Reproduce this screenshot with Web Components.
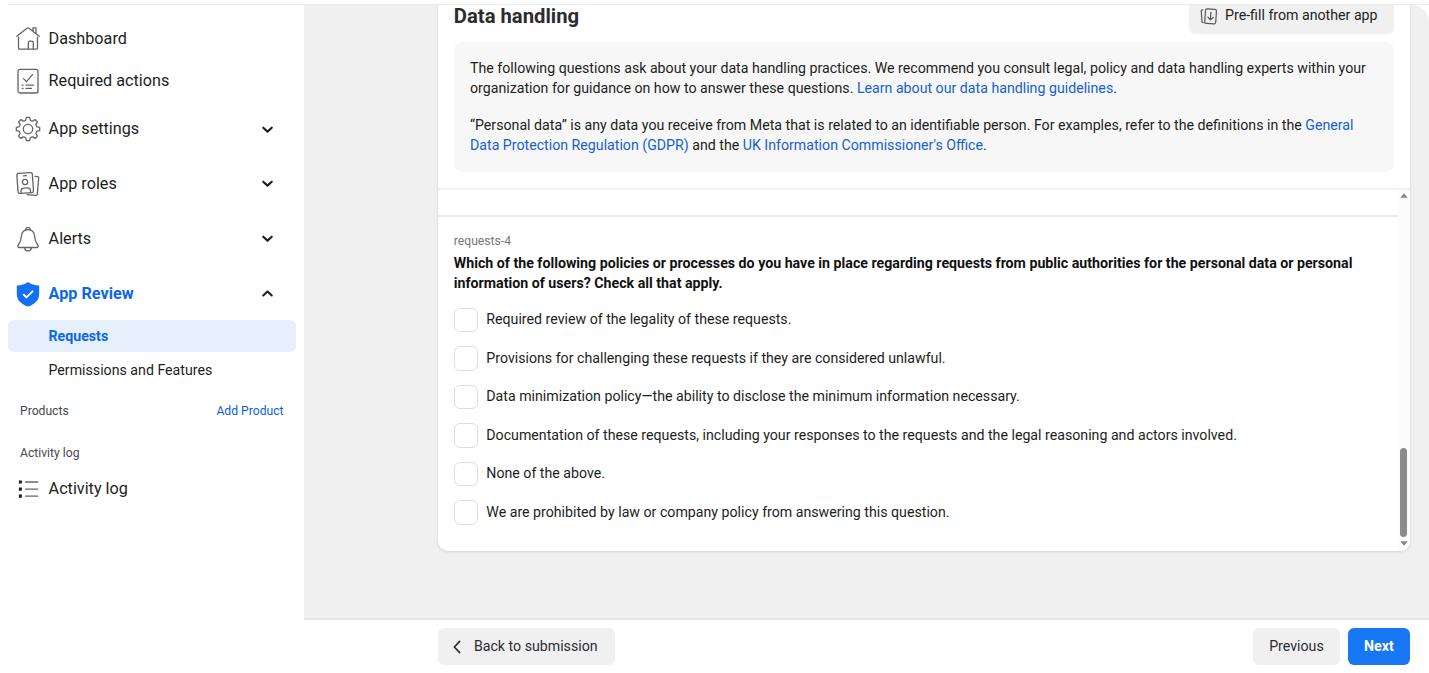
<!DOCTYPE html>
<html lang="en">
<head>
<meta charset="utf-8">
<title>App Review – Data handling</title>
<style>
html,body{margin:0;height:100%;overflow:hidden;background:#fff}
body{font-family:Roboto,"Liberation Sans",sans-serif;color:#1c1e21}
</style>
</head>
<body>
<app-shell></app-shell>
<script>
const define=(name,html,setup)=>customElements.define(name,class extends HTMLElement{
  connectedCallback(){
    if(this.shadowRoot)return;
    const t=document.createElement('template');
    t.innerHTML=html;
    const root=this.attachShadow({mode:'open'});
    if(setup)setup(this,t.content);
    root.append(t.content);
  }
});

const gear=(()=>{
  const p=[];
  for(let i=0;i<8;i++){
    const a=i*45-90;
    [[-22.5,8.9],[-14,9.2],[-8,11.8],[8,11.8],[14,9.2]].forEach(([d,r])=>{
      const q=(a+d)*Math.PI/180;
      p.push((12+r*Math.cos(q)).toFixed(2)+','+(12+r*Math.sin(q)).toFixed(2));
    });
  }
  return p.join(' ');
})();

const icons={
  home:'<path d="M2.500 10.200v10.800q0 1.200 1.200 1.200h16.600q1.200 0 1.200-1.200V10.200M.8 9.300 11 1.200q1-.8 2 0l10.200 8.100M17 4.100V.8h3v5.600M12.300 22v-6.200q0-1.700 1.700-1.700h1.600q1.700 0 1.700 1.700V22"/>',
  tasks:'<rect x="2" y=".3" width="20" height="23.700" rx="2"/><path d="m7.500 9.600 3 3 6-7M10 16.200h7.500M10 19.400h5.500"/><path d="M6.200 16.200h.9M6.200 19.400h.9"/>',
  gear:'<polygon points="'+gear+'"/><circle cx="12" cy="12" r="4.700"/>',
  roles:'<g transform="rotate(-4 9 12)"><rect x="1.500" y="1" width="15.500" height="20" rx="1.600"/><circle cx="9.200" cy="10" r="2.600"/><path d="M4.500 20.500v-1.500q0-3 3-3h3.500q3 0 3 3v1.500M8 3.800h3"/></g><path d="m19 4.400 2.600.3q1.200.1 1.100 1.300l-1.400 16.200q-.1 1.200-1.300 1.100l-9-.7"/>',
  bell:'<path d="M9.800 3.300V2.200q0-1.500 1.500-1.500h1.400q1.500 0 1.500 1.500v1.100M12 2.700c-4.400 0-6.300 3-6.600 6.600-.3 4.500-1.200 6.300-3.200 8.700-.9 1.200-.3 2.500 1.100 2.500h17.400c1.400 0 2-1.300 1.100-2.500-2-2.400-2.900-4.200-3.200-8.700-.3-3.600-2.200-6.600-6.600-6.600zM8.500 20.700q.5 3.300 3.500 3.300t3.500-3.300"/>',
  shield:'<path d="M12 0c3 2.300 6.700 3.300 11.200 3.500v8.300c0 6.500-4.500 10.800-11.200 12.800C5.300 22.600.8 18.300.8 11.800V3.500C5.300 3.300 9 2.300 12 0z" fill="#1471f5" stroke="none"/><path d="m7.800 12.700 2.700 2.700 6-6" stroke="#fff" stroke-width="2"/>',
  list:'<path d="M9.500 5h12.200M9.500 12.100h12.200M9.500 19.200h12.200"/><path d="M2.900 3.400h3v3.200h-3zM2.900 10.500h3v3.200h-3zM2.900 17.600h3v3.200h-3z" fill="#1c1e21" stroke="none"/>',
  copy:'<g transform="rotate(4 14 12)"><rect x="7.200" y="1.600" width="15.500" height="20.500" rx="2.200"/><path d="M15 6v10.500M11.200 13l3.800 3.700 3.800-3.700"/></g><path d="M4 2.500 2.700 3q-1 .4-.9 1.500l1 14.500q.1 1.100 1 1.400l1 .4"/>',
  down:'<path d="m6 9.500 6 5.500 6-5.500"/>',
  up:'<path d="m6 14.800 6-5.500 6 5.500"/>',
  back:'<path d="M16 3.500 8 12l8 8.500"/>'
};

define('ui-icon','<style>:host{display:block;flex:none;width:24px;height:24px}svg{display:block;width:100%;height:100%;overflow:visible}</style><svg viewBox="0 0 24 24" fill="none" stroke="currentColor" stroke-linecap="round" stroke-linejoin="round"></svg>',
(h,r)=>{
  const s=r.querySelector('svg');
  s.setAttribute('stroke-width',h.getAttribute('weight')||1.3);
  s.innerHTML=icons[h.getAttribute('name')];
});

define('nav-item',`<style>
:host{display:flex;align-items:center;box-sizing:border-box;height:54.900px;padding:0 28.500px 0 16.400px;font-size:16.200px;line-height:20px;color:#1c1e21}
:host([compact]){height:42px}
:host([active]){color:#0a66ee;font-weight:700}
.icon{color:#626568}
.label{flex:1;margin-left:8.200px;white-space:nowrap}
.chev{width:17px;height:17px;color:#1c1e21}
</style><ui-icon class="icon"></ui-icon><span class="label"><slot></slot></span>`,
(h,r)=>{
  r.querySelector('.icon').setAttribute('name',h.getAttribute('icon'));
  const c=h.getAttribute('chevron');
  if(c){
    const i=document.createElement('ui-icon');
    i.className='chev';i.setAttribute('name',c);i.setAttribute('weight','3');
    r.append(i);
  }
});

define('nav-sub',`<style>
:host{display:flex;align-items:center;box-sizing:border-box;height:32.300px;margin:0 8.500px 0 8px;padding-left:40.500px;border-radius:6px;font-size:14.180px}
:host([active]){background:#e6f0fd;color:#0a66ee;font-weight:700}
</style><slot></slot>`);

define('nav-heading',`<style>
:host{display:flex;align-items:center;justify-content:space-between;height:24px;padding:0 20.500px 0 20px;font-size:12.150px;color:#444950}
::slotted(a){color:#0a5fdc}
</style><slot></slot>`);

define('side-nav',`<style>
:host{display:flex;flex-direction:column;box-sizing:border-box;width:304px;padding-top:12.600px;background:#fff}
.subs{display:flex;flex-direction:column;gap:1.600px;margin-top:-1px}
.products{margin-top:12.600px}.log{margin-top:18px}
.last{margin-top:3px}
</style>
<nav-item compact icon="home">Dashboard</nav-item>
<nav-item compact icon="tasks">Required actions</nav-item>
<nav-item icon="gear" chevron="down">App settings</nav-item>
<nav-item icon="roles" chevron="down">App roles</nav-item>
<nav-item icon="bell" chevron="down">Alerts</nav-item>
<nav-item active icon="shield" chevron="up">App Review</nav-item>
<div class="subs"><nav-sub active>Requests</nav-sub><nav-sub>Permissions and Features</nav-sub></div>
<nav-heading class="products"><span>Products</span><a>Add Product</a></nav-heading>
<nav-heading class="log"><span>Activity log</span></nav-heading>
<nav-item compact class="last" icon="list">Activity log</nav-item>`);

define('ui-button',`<style>
:host{display:flex;align-items:center;justify-content:center;box-sizing:border-box;height:36.500px;border-radius:6px;background:#f0f0f0;font-size:14.180px;line-height:20px;white-space:nowrap;color:#2a2c30}
:host([primary]){background:#1877f2;color:#fff;font-weight:700}
</style><slot></slot>`);

define('info-box',`<style>
:host{display:block;box-sizing:border-box;height:130px;padding:15.500px 16.200px;border-radius:8px;background:#f7f7f7;font-size:14.180px;line-height:20.250px;white-space:nowrap}
p{margin:0 0 16.800px}a{color:#1560d4}
</style>
<p>The following questions ask about your data handling practices. We recommend you consult legal, policy and data handling experts within your<br>organization for guidance on how to answer these questions. <a>Learn about our data handling guidelines</a>.</p>
<p>“Personal data” is any data you receive from Meta that is related to an identifiable person. For examples, refer to the definitions in the <a>General<br>Data Protection Regulation (GDPR)</a> and the <a>UK Information Commissioner's Office</a>.</p>`);

define('check-option',`<style>
:host{display:flex;align-items:center;height:38.500px;font-size:14.180px;white-space:nowrap}
i{box-sizing:border-box;width:24.500px;height:24.500px;margin-right:8px;border:1px solid #dcdee1;border-radius:6px;background:#fff}
span{padding-bottom:1.300px}
</style><i></i><span><slot></slot></span>`);

define('scroll-track',`<style>
:host{display:flex;flex-direction:column;align-items:center;box-sizing:border-box;width:12.500px;padding:2.500px 0 5px;background:#fcfcfc;border-bottom-right-radius:9px}
.thumb{width:7px;height:89px;margin-top:auto;margin-bottom:4px;border-radius:4px;background:#8b8b8b}
svg{display:block;width:8px;height:5px;fill:#858585}
</style><svg viewBox="0 0 8 5"><path d="M4 .3 7.700 4.700H.3z"/></svg><div class="thumb"></div><svg viewBox="0 0 8 5"><path d="M4 4.700 7.700.3H.3z"/></svg>`);

define('question-panel',`<style>
:host{display:flex;height:361px;border-top:2px solid #f1f1f2}
.body{flex:1;min-width:0}
.previous{height:25px;border-bottom:2px solid #ebebec}
.q{padding:16px 0 0 16px}
.id{font-size:12.150px;line-height:16px;color:#75787d}
h2{margin:3.800px 0 7.500px;font-size:14.190px;line-height:20.250px;font-weight:700;color:#111;white-space:nowrap}
</style>
<div class="body"><div class="previous"></div><div class="q">
<div class="id">requests-4</div>
<h2>Which of the following policies or processes do you have in place regarding requests from public authorities for the personal data or personal<br>information of users? Check all that apply.</h2>
<div class="options">
<check-option>Required review of the legality of these requests.</check-option>
<check-option>Provisions for challenging these requests if they are considered unlawful.</check-option>
<check-option>Data minimization policy—the ability to disclose the minimum information necessary.</check-option>
<check-option>Documentation of these requests, including your responses to the requests and the legal reasoning and actors involved.</check-option>
<check-option>None of the above.</check-option>
<check-option>We are prohibited by law or company policy from answering this question.</check-option>
</div></div></div><scroll-track></scroll-track>`);

define('data-card',`<style>
:host{display:block;box-sizing:border-box;width:972.300px;height:546px;margin-left:133.800px;background:#fff;border-radius:0 0 10px 10px;box-shadow:0 1px 3px rgba(0,0,0,.13)}
header{display:flex;justify-content:space-between;height:29px;padding:0 16.300px 0 16px}
h1{margin:0;font-size:20.250px;line-height:22px;font-weight:700;color:#2b2c30}
ui-button{width:205px;height:29px;border-radius:0 0 6px 6px;align-items:flex-start;line-height:20px;color:#1c1e21}
ui-button ui-icon{width:17px;height:17px;margin:2.500px 8px 0 -5px;color:#55585c}
info-box{margin:8px 16.300px 16px 16px}
</style>
<header><h1>Data handling</h1><ui-button><ui-icon name="copy" weight="1.7"></ui-icon>Pre-fill from another app</ui-button></header>
<info-box></info-box>
<question-panel></question-panel>`);

define('page-footer',`<style>
:host{display:flex;gap:8px;box-sizing:border-box;height:55px;padding:8.400px 18.800px 0 134px;border-top:2px solid #e6e6e7;background:#fff}
ui-button{line-height:19px}
.back{width:176.500px;margin-right:auto}.back ui-icon{width:16px;height:16px;margin:1px 9px 0 -6px}
.prev{width:86.500px}.next{width:62.500px}
</style>
<ui-button class="back"><ui-icon name="back" weight="2.500"></ui-icon>Back to submission</ui-button>
<ui-button class="prev">Previous</ui-button><ui-button primary class="next">Next</ui-button>`);

define('app-shell',`<style>
:host{display:flex;flex-direction:column;height:673px;background:#fff}
.edge{flex:none;height:4px;margin-left:8px;border-bottom:1px solid #ececed}
.row{display:flex;height:668px}
main{flex:1;display:flex;flex-direction:column}
.canvas{height:613px;background:#f0f0f0;border-top-right-radius:18px;overflow:hidden}
</style>
<div class="edge"></div>
<div class="row"><side-nav></side-nav><main><div class="canvas"><data-card></data-card></div><page-footer></page-footer></main></div>`);
</script>
</body>
</html>
